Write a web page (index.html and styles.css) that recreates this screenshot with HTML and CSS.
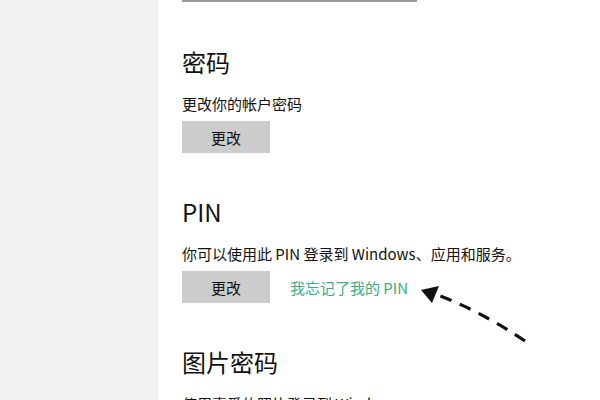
FILE: index.html
```html
<!DOCTYPE html>
<html>

<head>
	<meta name="viewport" content="width=device-width, initial-scale=1" />
	<title>登录选项</title>
	<link rel="stylesheet" href="styles.css">
</head>

<body>
	<div class="page">
		<div class="side"></div>
		<div class="main">
			<div class="topbar"></div>

			<div class="sect">
				<h2>密码</h2>
				<p class="desc">更改你的帐户密码</p>
				<div class="row">
					<button type="button">更改</button>
				</div>
			</div>

			<div class="sect">
				<h2>PIN</h2>
				<p class="desc">你可以使用此 PIN 登录到 Windows、应用和服务。</p>
				<div class="row">
					<button type="button">更改</button>
					<a class="link" href="#">我忘记了我的 PIN</a>
				</div>
			</div>

			<div class="sect">
				<h2>图片密码</h2>
				<p class="desc">使用喜爱的照片登录到 Windows</p>
			</div>
		</div>
	</div>

	<!-- hand drawn arrow over the page -->
	<svg class="arrow" width="600" height="400" viewBox="0 0 600 400">
		<path d="M525 341 Q482 312 438 295" fill="none" stroke="#111" stroke-width="3.2" stroke-dasharray="12 9" />
		<polygon points="421,290 439,286 432,303" fill="#111" />
	</svg>
</body>

</html>
```

FILE: styles.css
```css
body {
	margin:0;
	font-family:"Noto Sans CJK SC", "Noto Sans", sans-serif;
	color:#111;
	background-color:#fff;
	overflow:hidden;
}

.page {
	display:flex;
	height:400px;
}

.side {
	width:158px;
	flex:none;
	background-color:#f2f2f2;
}

.main {
	flex:1;
	padding-left:24px;
}

.topbar {
	width:235px;
	height:2px;
	background-color:#9a9a9a;
	margin-bottom:44px;
}

.sect {
	margin-bottom:43px;
}

h2 {
	margin:0;
	font-size:24px;
	line-height:32px;
	font-weight:normal;
}

.desc {
	margin:16px 0 0 0;
	font-size:15px;
	line-height:20px;
}

.row {
	display:flex;
	align-items:center;
	gap:20px;
	margin-top:7px;
}

button {
	width:88px;
	height:32px;
	border:0;
	padding:0;
	background-color:#cccccc;
	color:#111;
	font-family:inherit;
	font-size:15px;
}

.link {
	color:#35b084;
	font-size:15px;
	text-decoration:none;
}

.arrow {
	position:absolute;
	left:0;
	top:0;
	pointer-events:none;
}
```
